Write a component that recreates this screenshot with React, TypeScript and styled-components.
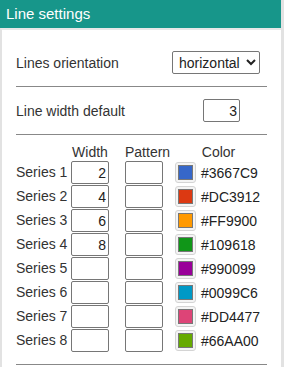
import React from "react";
import styled, { createGlobalStyle } from "styled-components";

const Global = createGlobalStyle`
  html, body { margin: 0; padding: 0; background: #ffffff; }
  body { font-family: "Liberation Sans", Arial, sans-serif; color: #333333; }
  * { box-sizing: border-box; }
`;

const Panel = styled.div`
  width: 284px;
  border-right: 3px solid #e2e2e2;
  min-height: 367px;
`;

const Header = styled.div`
  height: 28px;
  background: #17968a;
  color: #ffffff;
  font-size: 15px;
  line-height: 28px;
  padding-left: 6px;
`;

const Body = styled.div`
  border-left: 2px solid #e2e2e2;
  border-top: 2px solid #e8e8e8;
  padding: 0 14px 0 14px;
  min-height: 339px;
`;

const Row = styled.div<{ $top: number; $right: number }>`
  display: flex;
  align-items: center;
  justify-content: space-between;
  padding: ${(p) => p.$top}px ${(p) => p.$right}px 12px 0;
  font-size: 14px;
  border-bottom: 1px solid #888888;
`;

const Select = styled.select`
  width: 88px;
  height: 23px;
  font-family: "Liberation Sans", Arial, sans-serif;
  font-size: 14px;
  color: #222222;
  border: 1px solid #767676;
  border-radius: 2px;
  background: #ffffff;
  padding: 0 0 0 2px;
`;

const NumBox = styled.input<{ $w: number }>`
  width: ${(p) => p.$w}px;
  height: 23px;
  font-family: "Liberation Sans", Arial, sans-serif;
  font-size: 14px;
  color: #222222;
  text-align: right;
  border: 1px solid #767676;
  border-radius: 2px;
  padding: 0 2px 0 2px;
  margin: 0;
  background: #ffffff;
`;

const Grid = styled.div`
  display: grid;
  grid-template-columns: 55px 38px 54px 99px;
  grid-auto-rows: 24px;
  grid-template-rows: 26px;
  align-items: start;
  font-size: 14px;
  padding-bottom: 11px;
  border-bottom: 1px solid #888888;
`;

const HeadCell = styled.div<{ $pad?: number; $end?: boolean }>`
  justify-self: ${(p) => (p.$end ? "end" : "stretch")};
  width: ${(p) => (p.$end ? "38px" : "auto")};
  text-align: center;
  line-height: 16px;
  padding-top: 9px;
  padding-left: ${(p) => p.$pad ?? 0}px;
  white-space: nowrap;
`;

const Label = styled.div`
  line-height: 23px;
  white-space: nowrap;
`;

const PatternCell = styled.div`
  justify-self: end;
`;

const ColorCell = styled.div`
  display: flex;
  align-items: center;
  gap: 5px;
  padding-left: 12px;
  height: 23px;
  color: #222222;
`;

const Swatch = styled.div`
  width: 21px;
  height: 21px;
  border: 1px solid #d4d4d4;
  border-radius: 3px;
  background: #f4f4f4;
  padding: 2px;
  flex: none;
`;

const SwatchFill = styled.div<{ $c: string }>`
  width: 100%;
  height: 100%;
  background: ${(p) => p.$c};
  border: 1px solid #777777;
`;

const series = [
  { w: "2", c: "#3667C9" },
  { w: "4", c: "#DC3912" },
  { w: "6", c: "#FF9900" },
  { w: "8", c: "#109618" },
  { w: "", c: "#990099" },
  { w: "", c: "#0099C6" },
  { w: "", c: "#DD4477" },
  { w: "", c: "#66AA00" },
];

export default function App() {
  return (
    <>
      <Global />
      <Panel>
        <Header>Line settings</Header>
        <Body>
          <Row $top={21} $right={7}>
            <span>Lines orientation</span>
            <Select defaultValue="horizontal">
              <option value="horizontal">horizontal</option>
              <option value="vertical">vertical</option>
            </Select>
          </Row>
          <Row $top={12} $right={27}>
            <span>Line width default</span>
            <NumBox $w={37} defaultValue="3" />
          </Row>
          <Grid>
            <div />
            <HeadCell>Width</HeadCell>
            <HeadCell $end>Pattern</HeadCell>
            <HeadCell $pad={12}>Color</HeadCell>
            {series.map((s, i) => (
              <React.Fragment key={i}>
                <Label>Series {i + 1}</Label>
                <NumBox $w={38} defaultValue={s.w} />
                <PatternCell>
                  <NumBox $w={38} defaultValue="" />
                </PatternCell>
                <ColorCell>
                  <Swatch>
                    <SwatchFill $c={s.c} />
                  </Swatch>
                  <span>{s.c}</span>
                </ColorCell>
              </React.Fragment>
            ))}
          </Grid>
        </Body>
      </Panel>
    </>
  );
}
